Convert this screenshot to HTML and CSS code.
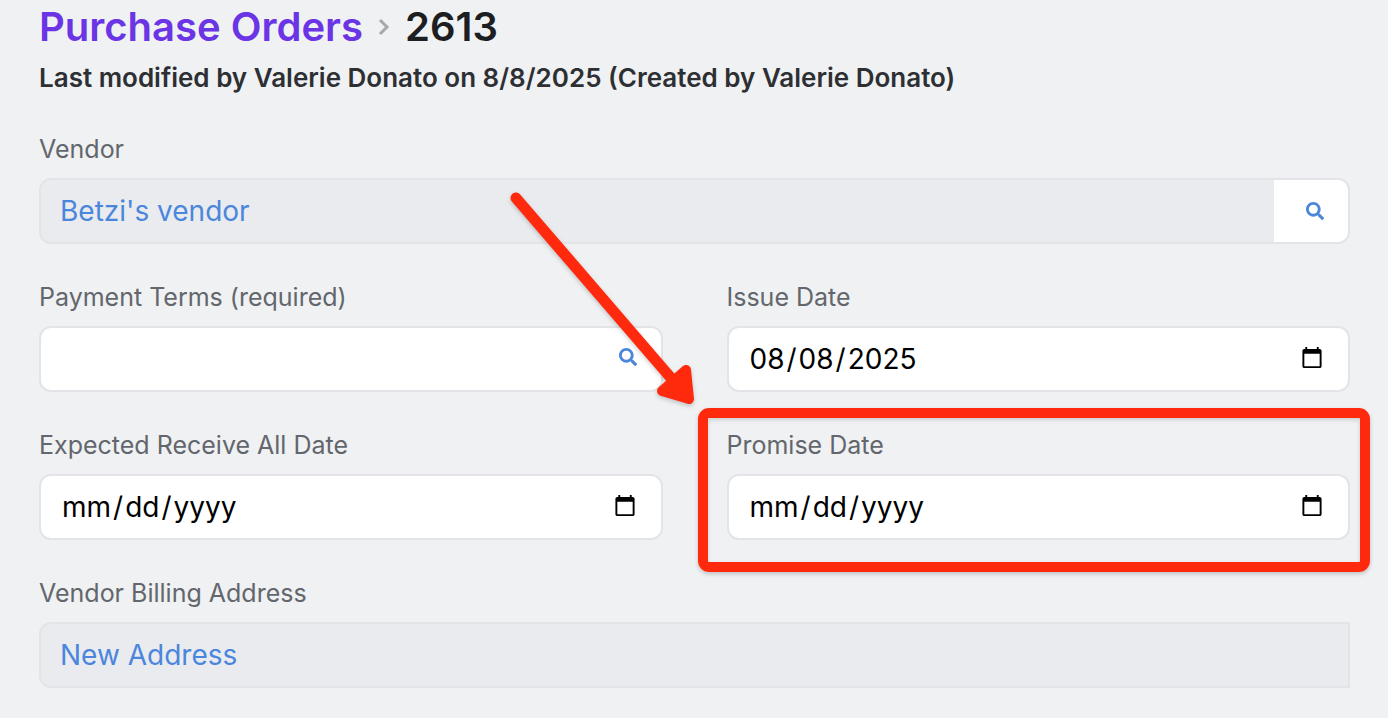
FILE: index.html
```html
<!DOCTYPE html>
<html lang="en-US">
<head>
    <meta charset="UTF-8">
    <meta name="viewport" content="width=device-width, initial-scale=1.0">
    <title>Purchase Orders - 2613</title>
    <link rel="stylesheet" href="styles.css">
</head>
<body>

    <main class="page">
        <!-- Breadcrumb -->
        <h1 class="breadcrumb">
            <a href="#">Purchase Orders</a>
            <svg class="chevron" viewBox="0 0 10 16" aria-hidden="true"><path d="M1 1 8 8l-7 7"/></svg>
            <span>2613</span>
        </h1>
        <p class="modified">Last modified by Valerie Donato on 8/8/2025 (Created by Valerie Donato)</p>

        <form class="fields">
            <div class="field wide">
                <span class="label" id="vendorLabel">Vendor</span>
                <div class="control locked">
                    <a href="#" class="value" aria-labelledby="vendorLabel vendorLink" id="vendorLink">Betzi's vendor</a>
                    <button type="button" class="lookup block" aria-label="Search vendors">
                        <svg class="search" viewBox="0 0 512 512" aria-hidden="true"><path d="M505 442.700 405.300 343c-4.500-4.500-10.600-7-17-7H372c27.600-35.300 44-79.700 44-128C416 93.100 322.900 0 208 0S0 93.100 0 208s93.100 208 208 208c48.300 0 92.700-16.400 128-44v16.300c0 6.400 2.500 12.500 7 17l99.700 99.700c9.400 9.400 24.600 9.400 33.900 0l28.300-28.300c9.400-9.400 9.400-24.600.1-34zM208 336c-70.700 0-128-57.200-128-128 0-70.700 57.200-128 128-128 70.700 0 128 57.200 128 128 0 70.700-57.200 128-128 128z"/></svg>
                    </button>
                </div>
            </div>

            <div class="field">
                <label class="label" for="terms">Payment Terms (required)</label>
                <div class="control">
                    <input type="text" id="terms">
                    <button type="button" class="lookup inline" aria-label="Search payment terms">
                        <svg class="search" viewBox="0 0 512 512" aria-hidden="true"><path d="M505 442.700 405.300 343c-4.500-4.500-10.600-7-17-7H372c27.600-35.300 44-79.700 44-128C416 93.100 322.900 0 208 0S0 93.100 0 208s93.100 208 208 208c48.300 0 92.700-16.400 128-44v16.300c0 6.400 2.500 12.500 7 17l99.700 99.700c9.400 9.400 24.600 9.400 33.900 0l28.300-28.300c9.400-9.400 9.400-24.600.1-34zM208 336c-70.700 0-128-57.200-128-128 0-70.700 57.200-128 128-128 70.700 0 128 57.200 128 128 0 70.700-57.200 128-128 128z"/></svg>
                    </button>
                </div>
            </div>
            <div class="field">
                <label class="label" for="issueDate">Issue Date</label>
                <div class="control"><input type="date" id="issueDate" value="2025-08-08"></div>
            </div>

            <div class="field">
                <label class="label" for="receiveDate">Expected Receive All Date</label>
                <div class="control"><input type="date" id="receiveDate"></div>
            </div>
            <div class="field highlighted">
                <label class="label" for="promiseDate">Promise Date</label>
                <div class="control"><input type="date" id="promiseDate"></div>
                <!-- Arrow pointing at the highlighted field -->
                <svg class="arrow" viewBox="0 0 192 220" aria-hidden="true">
                    <path class="shaft" d="M11 11 172 198"/>
                    <path class="head" d="M181 183 157 204 184 212z"/>
                </svg>
            </div>

            <div class="field wide">
                <span class="label" id="billingLabel">Vendor Billing Address</span>
                <div class="control locked square">
                    <a href="#" class="value" aria-labelledby="billingLabel billingLink" id="billingLink">New Address</a>
                </div>
            </div>
        </form>
    </main>

</body>
</html>
```
FILE: styles.css
```css
* {
    margin: 0;
    padding: 0;
    box-sizing: border-box;
}
body {
    font-family: Inter, "Liberation Sans", sans-serif;
    color: #1c1e21;
    background: #eff1f3;
}

a {
    text-decoration: none;
}

.page {
    padding: 2px 38px 28px 39px;
}

.breadcrumb {
    display: flex;
    align-items: center;
    gap: 16px;
    font-size: 40px;
    font-weight: 600;
    line-height: 50px;
}

.breadcrumb a {
    color: #6b34e4;
}

.chevron {
    width: 10px;
    height: 16px;
    overflow: visible;
    fill: none;
    stroke: #a6a9ae;
    stroke-width: 3;
}

.modified {
    margin-top: 10px;
    color: #2d2f33;
    font-size: 26px;
    font-weight: 600;
    line-height: 32px;
}

.fields {
    display: grid;
    grid-template-columns: 1fr 1fr;
    gap: 37px 64px;
    margin-top: 39px;
}

.field {
    display: flex;
    flex-direction: column;
    gap: 13px;
}

.wide {
    grid-column: 1 / -1;
}

.label {
    color: #63666c;
    font-size: 25px;
    line-height: 32px;
}

.control {
    display: flex;
    height: 66px;
    border: 2px solid #e3e4e7;
    border-radius: 12px;
    background: #fff;
    overflow: hidden;
}

.locked {
    background: #e9ebee;
}

.square {
    border-radius: 12px 0 0 12px;
}

.value {
    flex: 1;
    padding-left: 19px;
    color: #4b86dd;
    font-size: 28px;
    line-height: 62px;
}

input {
    flex: 1;
    min-width: 0;
    padding: 0 22px 0 20px;
    border: none;
    outline: none;
    background: none;
    color: #000;
    font-family: inherit;
    font-size: 28px;
}

input::-webkit-datetime-edit-text {
    padding: 0 1px;
}

input::-webkit-calendar-picker-indicator {
    width: 24px;
    height: 24px;
    margin-bottom: 3px;
}

.lookup {
    display: flex;
    align-items: center;
    padding: 0 24px;
    border: none;
    background: none;
    cursor: pointer;
}

.block {
    padding-left: 32px;
    background: #fff;
}

.inline {
    padding-bottom: 4px;
}

.search {
    width: 18px;
    height: 18px;
    fill: #4b86dd;
}

/* Red callout */
.highlighted {
    position: relative;
}

.highlighted::after {
    content: "";
    position: absolute;
    inset: -21px -20px -32px -29px;
    border: 10px solid #ff2a0d;
    border-radius: 11px;
    box-shadow: 0 2px 4px rgba(0, 0, 0, 0.2), inset 0 2px 4px rgba(0, 0, 0, 0.15);
    pointer-events: none;
}

.arrow {
    position: absolute;
    left: -222px;
    top: -242px;
    width: 192px;
    height: 220px;
    overflow: visible;
    fill: #ff2a0d;
    stroke: #ff2a0d;
    stroke-linecap: round;
    stroke-linejoin: round;
    filter: drop-shadow(0 2px 2px rgba(0, 0, 0, 0.2));
    pointer-events: none;
}

.shaft {
    stroke-width: 11;
}

.head {
    stroke-width: 10;
}
```
